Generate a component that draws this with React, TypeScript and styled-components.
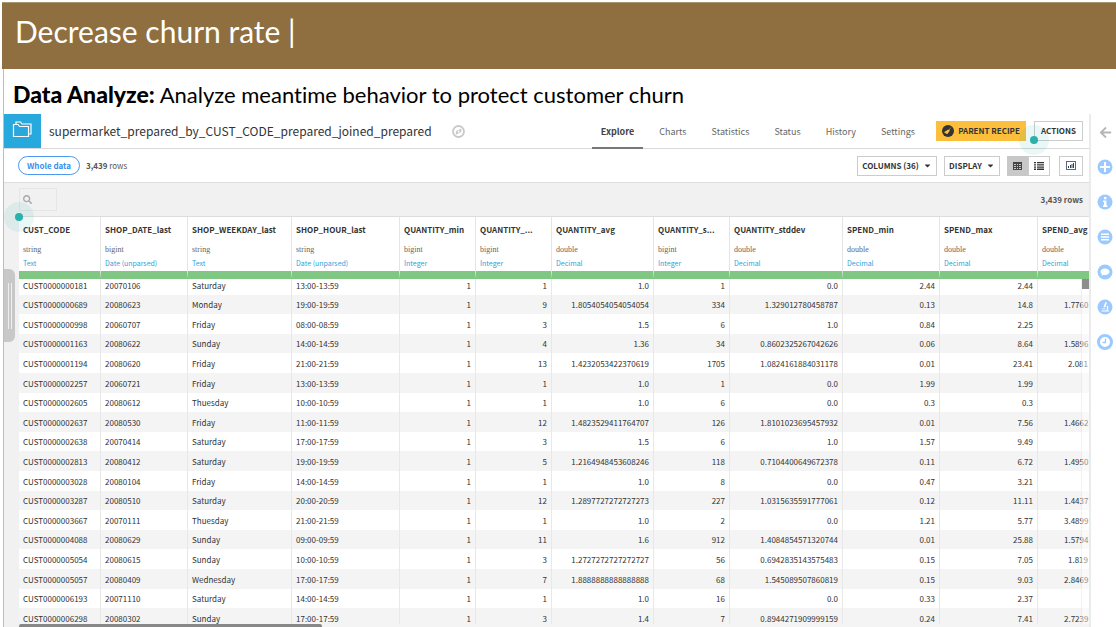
import React from "react";
import styled, { createGlobalStyle, css } from "styled-components";
import { FaArrowLeft, FaCaretDown, FaSearch } from "react-icons/fa";

const GlobalStyle = createGlobalStyle`
  *, *::before, *::after { box-sizing: border-box; }
  body {
    margin: 0;
    background: #fff;
    color: #333;
    font-family: "Noto Sans CJK SC", "Noto Sans", sans-serif;
    font-size: 9px;
    line-height: 12px;
  }
  button, input { font: inherit; color: inherit; }
`;

const Page = styled.div`
  display: flex;
  flex-direction: column;
  height: 100vh;
  padding: 2px 0 0 2px;
  overflow: hidden;
`;

const Banner = styled.header`
  flex: none;
  height: 67px;
  padding: 10px 13px;
  background: #8f6f3f;
  border-top: 1px solid #a9966f;
`;

const BannerTitle = styled.h1`
  margin: 0;
  color: #fff;
  font: 400 30px/36px Lato, sans-serif;
`;

const Slide = styled.main`
  flex: 1;
  min-height: 0;
  display: flex;
  flex-direction: column;
  margin-left: 1px;
  border-left: 1px solid #bdbdbd;
`;

const Subtitle = styled.h2`
  flex: none;
  height: 45px;
  margin: 0;
  padding: 11px 9px 0;
  color: #000;
  font: 400 22px/28px Lato, sans-serif;
  font-variant-ligatures: none;
  b {
    font-size: 23px;
    font-weight: 900;
  }
`;

const Workspace = styled.div`
  flex: 1;
  min-height: 0;
  display: flex;
`;

const Content = styled.section`
  flex: 1;
  min-width: 0;
  display: flex;
  flex-direction: column;
`;

const TitleRow = styled.div`
  position: relative;
  flex: none;
  display: flex;
  align-items: center;
  height: 35px;
  padding-right: 6px;
  border-bottom: 1px solid #d9d9d9;
`;

const DatasetTile = styled.div`
  display: flex;
  align-items: center;
  justify-content: center;
  align-self: stretch;
  width: 37px;
  margin-right: 8px;
  padding-bottom: 4px;
  background: #28a9dd;
`;

const DatasetName = styled.span`
  margin-right: 20px;
  font-size: 12px;
  line-height: 16px;
`;

const Tabs = styled.nav`
  align-self: stretch;
  display: flex;
  gap: 7px;
  margin-left: auto;
  margin-right: 12px;
`;

const Tab = styled.a<{ $active?: boolean }>`
  height: 35px;
  padding: 0 9px;
  color: #666;
  line-height: 35px;
  text-decoration: none;
  ${(p) => p.$active && css`
    color: #444;
    font-weight: 700;
    border-bottom: 2px solid #777;
  `}
`;

const Button = styled.button<{ $width: number; $fill?: string }>`
  display: flex;
  align-items: center;
  justify-content: center;
  gap: 4px;
  width: ${(p) => p.$width}px;
  height: 20px;
  padding: 0;
  background: ${(p) => p.$fill ?? "#fff"};
  border: 1px solid ${(p) => p.$fill ?? "#ccc"};
  font-size: 8px;
  font-weight: 700;
  white-space: nowrap;
`;

const ActionGroup = styled.div`
  display: flex;
  gap: 8px;
`;

const Toolbar = styled.div`
  flex: none;
  display: flex;
  align-items: center;
  gap: 6px;
  height: 34px;
  padding: 0 6px 0 14px;
  border-bottom: 1px solid #ddd;
`;

const Pill = styled.button`
  width: 62px;
  height: 19px;
  padding: 0;
  background: #fff;
  border: 1px solid #4a98ef;
  border-radius: 10px;
  color: #3b8ff0;
  font-size: 8px;
  font-weight: 700;
`;

const RowCount = styled.span`
  color: #555;
  font-size: 8px;
`;

const ToolGroup = styled.div`
  display: flex;
  gap: 7px;
  margin-left: auto;
`;

const Toggle = styled.div`
  display: flex;
  margin-right: 2px;
`;

const Grid = styled.div`
  position: relative;
  flex: 1;
  min-height: 0;
  display: flex;
  flex-direction: column;
  padding-left: 15px;
  background: #f1f1f1;
`;

const FilterRow = styled.div`
  flex: none;
  display: flex;
  justify-content: space-between;
  align-items: center;
  height: 33px;
  padding-right: 6px;
`;

const SearchBox = styled.label`
  display: flex;
  align-items: center;
  width: 38px;
  height: 23px;
  padding-left: 3px;
  border: 1px solid #e6e6e6;
  color: #aaa;
  input {
    width: 22px;
    padding: 0;
    background: none;
    border: 0;
    outline: 0;
  }
`;

const TableFrame = styled.div`
  position: relative;
  flex: 1;
  min-height: 0;
  overflow: hidden;
  background: #fff;
  border-top: 1px solid #ddd;
`;

const Table = styled.table`
  width: 1110px;
  table-layout: fixed;
  border-collapse: separate;
  border-spacing: 0;
`;

const HeadCell = styled.th`
  height: 62px;
  padding: 5px 0 0 4px;
  border-right: 1px solid #e4e4e4;
  border-bottom: 8px solid #81c784;
  font-weight: 400;
  text-align: left;
  vertical-align: top;
  white-space: nowrap;
`;

const ColumnName = styled.div`
  height: 22px;
  font-size: 8px;
  font-weight: 700;
  line-height: 15px;
`;

const Storage = styled.div`
  color: #666;
  font: 8px/12px "Liberation Serif", serif;
`;

const Meaning = styled.div`
  color: #2f9fd8;
  font-size: 7px;
  line-height: 15px;
`;

const DataRow = styled.tr`
  height: 20px;
  &:nth-child(5n + 2), &:nth-child(5n + 4) { height: 19px; }
  &:first-child {
    height: 16px;
    vertical-align: top;
  }
  &:nth-child(even) { background: #f4f4f4; }
`;

const Cell = styled.td<{ $numeric: boolean }>`
  padding: 0 4px;
  border-right: 1px solid #e8e8e8;
  font-size: 8px;
  line-height: 13px;
  text-align: ${(p) => (p.$numeric ? "right" : "left")};
  white-space: nowrap;
  overflow: hidden;
`;

const EdgeFade = styled.div`
  position: absolute;
  top: 62px;
  right: 0;
  bottom: 0;
  width: 8px;
  background: rgba(255, 255, 255, 0.45);
  border-left: 1px solid rgba(0, 0, 0, 0.05);
  &::before {
    content: "";
    display: block;
    width: 7px;
    height: 10px;
    background: #8d8d8d;
  }
`;

const HScroll = styled.div`
  position: absolute;
  left: 0;
  right: 0;
  bottom: 0;
  height: 3px;
  background: #f4f4f4;
  &::before {
    content: "";
    display: block;
    width: 303px;
    height: 3px;
    background: #888;
    border-radius: 2px 2px 0 0;
  }
`;

const Handle = styled.div`
  position: absolute;
  left: 0;
  top: 86px;
  display: flex;
  align-items: center;
  justify-content: center;
  gap: 2px;
  width: 11px;
  height: 73px;
  background: #c8c8c8;
  border-radius: 0 6px 6px 0;
  &::before, &::after {
    content: "";
    width: 1px;
    height: 46px;
    background: #eee;
  }
`;

const Beacon = styled.span<{ $left?: string; $right?: string; $top: string }>`
  position: absolute;
  z-index: 2;
  left: ${(p) => p.$left ?? "auto"};
  right: ${(p) => p.$right ?? "auto"};
  top: ${(p) => p.$top};
  width: 30px;
  height: 30px;
  background: rgba(42, 178, 168, 0.1);
  border-radius: 50%;
  &::after {
    content: "";
    position: absolute;
    inset: 11px;
    background: #29b2aa;
    border-radius: 50%;
  }
`;

const Rail = styled.aside`
  flex: none;
  display: flex;
  flex-direction: column;
  align-items: center;
  gap: 19px;
  width: 27px;
  padding: 10px 0 0 3px;
  border-left: 2px solid #ebebeb;
  color: #b5b5b5;
`;

const RailButton = styled.button`
  display: flex;
  align-items: center;
  justify-content: center;
  width: 16px;
  height: 16px;
  padding: 0;
  background: none;
  border: 0;
`;

const columns: [string, string, string, number][] = [
  ["CUST_CODE", "string", "Text", 82],
  ["SHOP_DATE_last", "bigint", "Date (unparsed)", 87],
  ["SHOP_WEEKDAY_last", "string", "Text", 104],
  ["SHOP_HOUR_last", "string", "Date (unparsed)", 108],
  ["QUANTITY_min", "bigint", "Integer", 76],
  ["QUANTITY_...", "bigint", "Integer", 76],
  ["QUANTITY_avg", "double", "Decimal", 102],
  ["QUANTITY_s...", "bigint", "Integer", 76],
  ["QUANTITY_stddev", "double", "Decimal", 113],
  ["SPEND_min", "double", "Decimal", 97],
  ["SPEND_max", "double", "Decimal", 98],
  ["SPEND_avg", "double", "Decimal", 91],
];

const rows = [
  ["CUST0000000181", "20070106", "Saturday", "13:00-13:59", "1", "1", "1.0", "1", "0.0", "2.44", "2.44", ""],
  ["CUST0000000689", "20080623", "Monday", "19:00-19:59", "1", "9", "1.8054054054054054", "334", "1.329012780458787", "0.13", "14.8", "1.7760"],
  ["CUST0000000998", "20060707", "Friday", "08:00-08:59", "1", "3", "1.5", "6", "1.0", "0.84", "2.25", ""],
  ["CUST0000001163", "20080622", "Sunday", "14:00-14:59", "1", "4", "1.36", "34", "0.8602325267042626", "0.06", "8.64", "1.5896"],
  ["CUST0000001194", "20080620", "Friday", "21:00-21:59", "1", "13", "1.4232053422370619", "1705", "1.0824161884031178", "0.01", "23.41", "2.081"],
  ["CUST0000002257", "20060721", "Friday", "13:00-13:59", "1", "1", "1.0", "1", "0.0", "1.99", "1.99", ""],
  ["CUST0000002605", "20080612", "Thuesday", "10:00-10:59", "1", "1", "1.0", "6", "0.0", "0.3", "0.3", ""],
  ["CUST0000002637", "20080530", "Friday", "11:00-11:59", "1", "12", "1.4823529411764707", "126", "1.8101023695457932", "0.01", "7.56", "1.4662"],
  ["CUST0000002638", "20070414", "Saturday", "17:00-17:59", "1", "3", "1.5", "6", "1.0", "1.57", "9.49", ""],
  ["CUST0000002813", "20080412", "Saturday", "19:00-19:59", "1", "5", "1.2164948453608246", "118", "0.7104400649672378", "0.11", "6.72", "1.4950"],
  ["CUST0000003028", "20080104", "Friday", "14:00-14:59", "1", "1", "1.0", "8", "0.0", "0.47", "3.21", ""],
  ["CUST0000003287", "20080510", "Saturday", "20:00-20:59", "1", "12", "1.2897727272727273", "227", "1.0315635591777061", "0.12", "11.11", "1.4437"],
  ["CUST0000003667", "20070111", "Thuesday", "21:00-21:59", "1", "1", "1.0", "2", "0.0", "1.21", "5.77", "3.4899"],
  ["CUST0000004088", "20080629", "Sunday", "09:00-09:59", "1", "11", "1.6", "912", "1.4084854571320744", "0.01", "25.88", "1.5794"],
  ["CUST0000005054", "20080615", "Sunday", "10:00-10:59", "1", "3", "1.2727272727272727", "56", "0.6942835143575483", "0.15", "7.05", "1.819"],
  ["CUST0000005057", "20080409", "Wednesday", "17:00-17:59", "1", "7", "1.8888888888888888", "68", "1.545089507860819", "0.15", "9.03", "2.8469"],
  ["CUST0000006193", "20071110", "Saturday", "14:00-14:59", "1", "1", "1.0", "16", "0.0", "0.33", "2.37", ""],
  ["CUST0000006298", "20080302", "Sunday", "17:00-17:59", "1", "3", "1.4", "7", "0.8944271909999159", "0.24", "7.41", "2.7239"],
];

const LastNumber = styled.span<{ $short: boolean }>`
  display: block;
  padding-left: ${(p) => (p.$short ? 26 : 22)}px;
  text-align: left;
`;

const railItems: [string, React.ReactNode][] = [
  ["Add", <path d="M7 3h2v4h4v2H9v4H7V9H3V7h4z" />],
  ["Details", <path d="M7 3h2.4v2.2H7zM6 6.5h3.4v4.8h1V13H6v-1.700h1V8H6z" />],
  ["Schema", <path d="M4 4.500h8V6H4zM4 7.200h8v1.500H4zM4 10h8v1.500H4z" />],
  ["Discussions", <path d="M8 4.500c2.600 0 4.500 1.300 4.500 3.200S10.600 11 8 11c-.6 0-1 0-1.500-.2-.7.7-1.500 1-2.300 1 .5-.5.8-1 .8-1.600-1-.6-1.500-1.500-1.500-2.500C3.500 5.800 5.400 4.500 8 4.500z" />],
  ["Lab", <path d="M8.500 3l1.500.6-2 5-1.500-.6zM10 6.500c1.800 1.300 1.600 3.500.5 5H12v1H4.500v-1h4.800c1-1.200 1.200-2.700.2-4zM5 9.400h3.500v.9H5z" />],
];

function FolderIcon() {
  return (
    <svg width="21" height="18" viewBox="0 0 21 18" fill="none" stroke="#fff" strokeWidth="1.200">
      <path d="M1.500 4.500h4.500l1.500 2h9v10h-15z" />
      <path d="M4 4.500v-2.500h4.500l1.500 2h9v10h-2.500" />
    </svg>
  );
}

function CompassIcon() {
  return (
    <svg width="13" height="13" viewBox="0 0 13 13">
      <circle cx="6.500" cy="6.500" r="5.500" fill="none" stroke="#c9c9c9" strokeWidth="1.800" />
      <path d="M9.300 3.500v3.600L3.900 9.700V6z" fill="#c9c9c9" />
      <circle cx="6.600" cy="6.600" r="1" fill="#fff" />
    </svg>
  );
}

function BroomBadge() {
  return (
    <svg width="12" height="12" viewBox="0 0 12 12">
      <circle cx="6" cy="6" r="6" fill="#333" />
      <path d="M9.800 1.800L7.300 5l.5.8-2.600 3.500L2 7.200l3.800-2.400.8-.1z" fill="#fbbf3b" />
    </svg>
  );
}

function TableIcon() {
  return (
    <svg width="9" height="8" viewBox="0 0 9 8">
      <path d="M0 0h9v8H0z" fill="#444" />
      <path d="M1 2h2v1H1zM4 2h1v1H4zM6 2h2v1H6zM1 4h2v1H1zM4 4h1v1H4zM6 4h2v1H6zM1 6h2v1H1zM4 6h1v1H4zM6 6h2v1H6z" fill="#c8c8c8" />
    </svg>
  );
}

function ListIcon() {
  return (
    <svg width="10" height="8" viewBox="0 0 10 8" fill="#333">
      <path d="M0 0h2v1.300H0zM3 0h7v1.300H3zM0 2.200h2v1.300H0zM3 2.200h7v1.300H3zM0 4.400h2v1.300H0zM3 4.400h7v1.300H3zM0 6.600h2v1.300H0zM3 6.600h7v1.300H3z" />
    </svg>
  );
}

function ChartIcon() {
  return (
    <svg width="10" height="9" viewBox="0 0 10 9">
      <rect x=".5" y=".5" width="9" height="8" fill="#fff" stroke="#667" />
      <path d="M2 5h1v2H2zM4 4h1v3H4zM5.500 3h1v4h-1zM7 2h1v5H7z" fill="#246" />
    </svg>
  );
}

export default function App() {
  return (
    <>
      <GlobalStyle />
      <Page>
        <Banner>
          <BannerTitle>Decrease churn rate |</BannerTitle>
        </Banner>
        <Slide>
          <Subtitle><b>Data Analyze:</b> Analyze meantime behavior to protect customer churn</Subtitle>
          <Workspace>
            <Content>
              <TitleRow>
                <DatasetTile><FolderIcon /></DatasetTile>
                <DatasetName>supermarket_prepared_by_CUST_CODE_prepared_joined_prepared</DatasetName>
                <CompassIcon />
                <Tabs>
                  <Tab href="#explore" $active>Explore</Tab>
                  {["Charts", "Statistics", "Status", "History", "Settings"].map((t) => (
                    <Tab key={t} href={`#${t.toLowerCase()}`}>{t}</Tab>
                  ))}
                </Tabs>
                <ActionGroup>
                  <Button $width={90} $fill="#fbbf3b"><BroomBadge />PARENT RECIPE</Button>
                  <Button $width={49}>ACTIONS</Button>
                </ActionGroup>
                <Beacon $right="40px" $top="11px" />
              </TitleRow>
              <Toolbar>
                <Pill>Whole data</Pill>
                <RowCount><b>3,439</b> rows</RowCount>
                <ToolGroup>
                  <Button $width={80}>COLUMNS (36) <FaCaretDown size={9} /></Button>
                  <Button $width={56}>DISPLAY <FaCaretDown size={9} /></Button>
                  <Toggle>
                    <Button $width={21} $fill="#c8c8c8" aria-label="Table view"><TableIcon /></Button>
                    <Button $width={22} aria-label="List view"><ListIcon /></Button>
                  </Toggle>
                  <Button $width={24} aria-label="Quick charts"><ChartIcon /></Button>
                </ToolGroup>
              </Toolbar>
              <Grid>
                <FilterRow>
                  <SearchBox><FaSearch size={9} /><input aria-label="Search columns" /></SearchBox>
                  <RowCount><b>3,439 rows</b></RowCount>
                </FilterRow>
                <TableFrame>
                  <Table>
                    <colgroup>
                      {columns.map(([name, , , width]) => <col key={name} width={width} />)}
                    </colgroup>
                    <thead>
                      <tr>
                        {columns.map(([name, storage, meaning]) => (
                          <HeadCell key={name} scope="col">
                            <ColumnName>{name}</ColumnName>
                            <Storage>{storage}</Storage>
                            <Meaning>{meaning}</Meaning>
                          </HeadCell>
                        ))}
                      </tr>
                    </thead>
                    <tbody>
                      {rows.map((row) => (
                        <DataRow key={row[0]}>
                          {row.map((value, i) => (
                            <Cell key={i} $numeric={i > 3}>
                              {i === 11 ? <LastNumber $short={value.length < 6}>{value}</LastNumber> : value}
                            </Cell>
                          ))}
                        </DataRow>
                      ))}
                    </tbody>
                  </Table>
                  <EdgeFade />
                  <HScroll />
                </TableFrame>
                <Handle />
                <Beacon $left="0" $top="19px" />
              </Grid>
            </Content>
            <Rail>
              <RailButton aria-label="Collapse"><FaArrowLeft size={13} /></RailButton>
              {railItems.map(([label, glyph]) => (
                <RailButton key={label} aria-label={label}>
                  <svg width="16" height="16" viewBox="0 0 16 16">
                    <circle cx="8" cy="8" r="7.500" fill="#9ccaff" />
                    <g fill="#fff">{glyph}</g>
                  </svg>
                </RailButton>
              ))}
              <RailButton aria-label="Timeline">
                <svg width="16" height="16" viewBox="0 0 16 16">
                  <circle cx="8" cy="8" r="6.500" fill="#fff" stroke="#9ccaff" strokeWidth="3" />
                  <path d="M8.500 4.500v4H5.500" fill="none" stroke="#9ccaff" strokeWidth="1.300" />
                </svg>
              </RailButton>
            </Rail>
          </Workspace>
        </Slide>
      </Page>
    </>
  );
}
